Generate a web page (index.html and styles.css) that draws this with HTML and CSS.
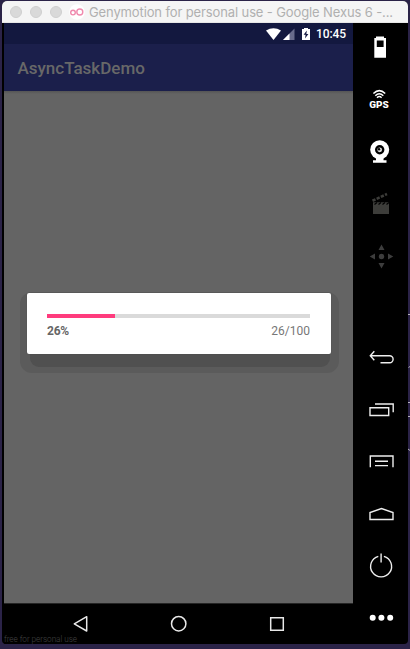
FILE: index.html
```
<!DOCTYPE html>
<html lang="en">
<head>
<meta charset="utf-8">
<title>Genymotion for personal use</title>
<link rel="stylesheet" href="styles.css">
</head>
<body>
<div class="window">
  <header class="titlebar">
    <i class="light"></i><i class="light"></i><i class="light"></i>
    <svg class="logo" width="16" height="16" viewBox="0 0 16 16"><circle cx="8" cy="8" r="7.8" fill="#fff"/><g fill="none" stroke="#f08aae" stroke-width="1.4"><circle cx="4" cy="8.6" r="2.3"/><circle cx="10.8" cy="8" r="3"/></g></svg>
    <span class="title">Genymotion for personal use - Google Nexus 6 -...</span>
  </header>
  <div class="main">
    <section class="phone">
      <div class="status">
        <svg width="46" height="14" viewBox="265 26 46 14">
          <path d="M266 29.6Q273.500 24.800 281 29.600L273.500 39Z" fill="#fff"/>
          <path d="M294.500 27.500V39H283Z" fill="#686b8c"/><path d="M289.500 32.500V39H283Z" fill="#fff"/>
          <path d="M302 28H304V27H308V28H310V39H302Z" fill="#fff"/><path d="M306.800 29.500L303.600 33.800H305.600L305 37.500L308.400 33H306.400Z" fill="#141842"/>
        </svg>
        <span class="clock">10:45</span>
      </div>
      <div class="appbar">AsyncTaskDemo</div>
      <div class="content">
        <div class="dialog">
          <div class="track"><div class="fill" style="width:26%"></div></div>
          <div class="labels"><b>26%</b><span>26/100</span></div>
        </div>
      </div>
      <nav class="nav">
        <svg width="349" height="41" viewBox="4 603 349 41" fill="none" stroke="#e8e8e8" stroke-width="1.5"><path d="M86.700 616.700V631L74.300 623.800Z" stroke-linejoin="round"/><circle cx="178.700" cy="623.700" r="7.200"/><path d="M270.700 617.700H283.300V630.300H270.700Z"/></svg>
        <span class="watermark">free for personal use</span>
      </nav>
    </section>
    <aside class="tools">
      <svg viewBox="353 23 55 52"><path fill="#fff" fill-rule="evenodd" d="M376 38V36.500H384V38H386V57.700H374.300V38ZM376.800 40.500V47H383.600V40.500Z"/></svg>
      <svg viewBox="353 75 55 52"><g fill="none" stroke="#fff" stroke-width="1.500"><path d="M373.400 93.500Q379.300 87.800 385.200 93.500M375.300 95.800Q379.300 91.800 383.300 95.800M377 97.800Q379.300 95.400 381.600 97.800"/></g><text class="gps" x="369.300" y="107.700" textLength="19.500" lengthAdjust="spacingAndGlyphs">GPS</text></svg>
      <svg viewBox="353 127 55 52"><g fill="#fff"><circle cx="379.700" cy="149.800" r="9.500"/><path d="M376 158H383.500V160.200H386.500V162.800H373V160.200H376Z"/></g><circle cx="379.700" cy="149.800" r="4.700"/><circle cx="379.700" cy="149.800" r="2.400" fill="#ddd"/><circle cx="379" cy="149.200" r="1.200"/></svg>
      <svg viewBox="353 179 55 52"><path fill="#3d3d3a" d="M373 202.200H389V214H373Z"/><path d="M374.500 204.500L377 202.500M378.500 204.500L381 202.500M382.500 204.500L385 202.500M386.500 204.500L389 202.500" stroke="#000" stroke-width="1.200"/><path d="M372.500 200.800L387 194" stroke="#3d3d3a" stroke-width="2.600" stroke-dasharray="3.300 1.300"/></svg>
      <svg viewBox="353 231 55 52"><path fill="#3d3d3d" d="M378.500 250L381.500 244.500L384.500 250ZM378.500 263L381.500 268.500L384.500 263ZM375 253.500L369.700 256.500L375 259.500ZM388 253.500L393.300 256.500L388 259.500Z"/><circle cx="381.500" cy="256.500" r="2.700" fill="#3d3d3d"/></svg>
      <div></div>
      <svg class="line" viewBox="353 335 55 52"><path d="M374.300 351.200L370.300 355.700L374.300 360.200M370.300 355.700H389.600A3.500 3.500 0 0 1 389.600 362.700H380.500"/></svg>
      <svg class="line" viewBox="353 387 55 52"><path d="M370 407.700H388.700V415.500H370ZM375 404H393.200V412.200"/></svg>
      <svg class="line" viewBox="353 439 55 52"><path d="M370.300 467.300V456H393V467.300M375 461.200H388M375 465.600H388"/></svg>
      <svg class="line" viewBox="353 491 55 52"><path d="M370 519.500V512.500L381.500 508.500L393 512.500V519.500Z"/></svg>
      <svg class="line" viewBox="353 543 55 52"><path d="M378.300 556.300A10.500 10.500 0 1 0 383.900 556.300M381.100 553.500V562.500"/></svg>
      <svg viewBox="353 595 55 52"><g fill="#fff"><circle cx="372.700" cy="617.700" r="3"/><circle cx="381.400" cy="617.700" r="3"/><circle cx="390.200" cy="617.700" r="3"/></g></svg>
    </aside>
  </div>
</div>
<svg class="edge" width="2" height="140" viewBox="408 313 2 140"><path d="M408 314.500H410M408.500 367.500L410 366.500M408 402.500H410M408 416.500H410M408 449L410 450.500" stroke="#b5b2bd"/></svg>
</body>
</html>
```
FILE: styles.css
```
* { box-sizing: border-box; }
body {
  margin: 0;
  width: 410px;
  height: 649px;
  padding: 1px 2px 5px;
  background: #2b2348;
  overflow: hidden;
  font-family: Roboto, sans-serif;
}
.window {
  width: 406px;
  height: 643px;
  border-radius: 5px 5px 4px 4px;
  overflow: hidden;
  background: #000;
}
.titlebar {
  height: 22px;
  display: flex;
  align-items: center;
  background: #f5f5f5;
  border-bottom: 1px solid #e6e6e6;
  padding-left: 8px;
}
.light {
  width: 12px;
  height: 12px;
  margin-right: 8px;
  border-radius: 50%;
  background: #d9d9d9;
  border: 1px solid #cfcfcf;
}
.logo { margin-left: -1px; flex: none; }
.title {
  margin-left: 4px;
  font: 13px Inter, sans-serif;
  letter-spacing: -0.12px;
  color: #b0b0b0;
  white-space: nowrap;
}
.main { display: flex; height: 621px; }
.phone {
  width: 349px;
  margin-left: 2px;
  display: flex;
  flex-direction: column;
}
.status {
  height: 21px;
  padding-right: 7px;
  display: flex;
  justify-content: flex-end;
  align-items: center;
  background: #13183f;
}
.clock {
  margin-left: 5px;
  color: #fff;
  font-size: 12px;
  font-weight: 500;
  letter-spacing: -0.1px;
}
.appbar {
  height: 47px;
  padding-left: 13.5px;
  line-height: 48px;
  background: #1b1f4b;
  color: #686868;
  font-size: 17px;
  font-weight: 500;
}
.content {
  position: relative;
  z-index: 0;
  height: 512px;
  padding: 202px 22.5px 0;
  background: linear-gradient(#555, #646464 3px);
}
.dialog {
  position: relative;
  width: 304px;
  height: 60.5px;
  padding: 20.5px 20.5px 0;
  border-radius: 2px;
  background: #fff;
  box-shadow: 0 0 1px #444;
}
.dialog::before,
.dialog::after {
  content: "";
  position: absolute;
  z-index: -1;
}
.dialog::before {
  inset: -1px -8.5px -19px -6.5px;
  border-radius: 12px;
  background: #5b5b5b;
}
.dialog::after {
  inset: 10px 1px -13.5px 3px;
  border-radius: 0 0 9px 9px;
  background: #505050;
}
.track { height: 4px; background: #dadada; }
.fill { height: 100%; background: #ff3b7d; }
.labels {
  display: flex;
  justify-content: space-between;
  margin-top: 6px;
  font-size: 12px;
  line-height: 15px;
  color: #777;
}
.labels b { color: #666; letter-spacing: -0.2px; }
.nav {
  position: relative;
  height: 41px;
  background: #000;
  border-top: 1px solid #252525;
}
.nav svg { display: block; margin-top: -1px; }
.watermark {
  position: absolute;
  left: 0;
  bottom: 0;
  font-size: 8.2px;
  line-height: 10px;
  letter-spacing: -0.04px;
  font-weight: 300;
  color: #444;
}
.tools {
  width: 55px;
  display: grid;
  grid-template-rows: repeat(12, 52px);
}
.tools svg { width: 55px; height: 52px; display: block; }
.line path { fill: none; stroke: #eee; stroke-width: 1.4; }
.gps {
  font: 900 9px Roboto, sans-serif;
  fill: #fff;
}
.edge { position: absolute; left: 408px; top: 313px; }
```
